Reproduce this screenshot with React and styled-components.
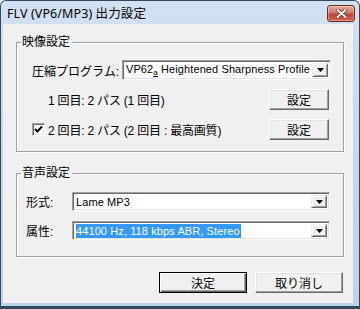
import React from 'react'
import styled, { createGlobalStyle } from 'styled-components'

const GlobalStyle = createGlobalStyle`
    html, body {
        margin: 0;
        padding: 0;
        background: #ffffff;
    }
    body {
        font-family: "Liberation Sans", "Noto Sans CJK JP", sans-serif;
        font-size: 12px;
        color: #000000;
    }
`

const Window = styled.div`
    width: 360px;
    height: 309px;
    box-sizing: border-box;
    display: flex;
    flex-direction: column;
    border: 1px solid #34495e;
    border-bottom-width: 3px;
    border-radius: 6px 6px 0 0;
    padding: 0 6px 3px 2px;
    background: linear-gradient(to bottom, #d2e1f2 0%, #c6d9ee 40%, #bcd3ec 100%);
`

const TitleBar = styled.div`
    height: 23px;
    display: flex;
    align-items: center;
    justify-content: space-between;
    padding-left: 4px;
`

const Title = styled.span`
    font-family: "Noto Sans", "Noto Sans CJK JP", sans-serif;
    font-size: 12.5px;
    color: #000000;
    letter-spacing: 0.1px;
`

const CloseButton = styled.div`
    width: 26px;
    height: 15px;
    margin-top: 2px;
    margin-right: -2px;
    display: flex;
    align-items: center;
    justify-content: center;
    border: 1px solid #6a2a22;
    border-radius: 3px;
    background: linear-gradient(to bottom, #e8a897 0%, #d27a66 45%, #c0452c 55%, #d0654c 100%);
    box-shadow: inset 0 0 0 1px rgba(255, 255, 255, 0.35);
`

const Content = styled.div`
    flex: 1;
    background: #f0f0f0;
    display: flex;
    flex-direction: column;
    padding: 18px 9px 0 13px;
`

const GroupBox = styled.div`
    border: 1px solid #a0a0a0;
    box-shadow: inset 1px 1px 0 #ffffff, 1px 1px 0 #ffffff;
    display: flex;
    flex-direction: column;
    margin-top: ${p => p.$top || 0}px;
`

const Legend = styled.span`
    align-self: flex-start;
    height: 14px;
    line-height: 14px;
    margin: -8px 0 0 4px;
    padding: 0 2px 0 1px;
    background: #f0f0f0;
`

const GroupBody = styled.div`
    display: flex;
    flex-direction: column;
    padding: ${p => p.$pad};
`

const Row = styled.div`
    display: flex;
    align-items: center;
    height: ${p => p.$h || 20}px;
    margin-top: ${p => p.$top || 0}px;
`

const Label = styled.span`
    width: ${p => p.$w}px;
    flex-shrink: 0;
    white-space: nowrap;
`

const PassText = styled.span`
    margin-left: ${p => p.$indent || 0}px;
    white-space: nowrap;
    letter-spacing: -0.2px;
`

const Combo = styled.div`
    box-sizing: border-box;
    width: ${p => p.$w}px;
    height: ${p => p.$h}px;
    display: flex;
    align-items: center;
    background: #ffffff;
    border: 1px solid;
    border-color: #a0a0a0 #ffffff #ffffff #a0a0a0;
    box-shadow: inset 1px 1px 0 #696969, inset -1px -1px 0 #e3e3e3;
    padding: 2px 2px 2px 3px;
`

const ComboText = styled.span`
    flex: 1;
    white-space: nowrap;
    overflow: hidden;
    line-height: 14px;
    font-size: 11px;
    letter-spacing: 0.1px;
`

const Selected = styled.span`
    background: #3399ff;
    color: #ffffff;
    padding: 1px 1px;
    margin-left: -1px;
`

const Sub = styled.span`
    font-size: 8px;
    position: relative;
    top: 2px;
    text-decoration: underline;
`

const ArrowButton = styled.div`
    box-sizing: border-box;
    width: 16px;
    height: 100%;
    flex-shrink: 0;
    display: flex;
    align-items: center;
    justify-content: center;
    background: #f0f0f0;
    border: 1px solid;
    border-color: #f0f0f0 #696969 #696969 #f0f0f0;
    box-shadow: inset 1px 1px 0 #ffffff, inset -1px -1px 0 #a0a0a0;
`

const Button = styled.div`
    box-sizing: border-box;
    width: ${p => p.$w}px;
    height: 21px;
    margin-left: ${p => (p.$push ? 'auto' : '0')};
    margin-right: ${p => p.$mr || 0}px;
    display: flex;
    align-items: center;
    justify-content: center;
    background: #f0f0f0;
    border: 1px solid;
    border-color: ${p => (p.$default ? '#000000' : '#ffffff #696969 #696969 #ffffff')};
    box-shadow: ${p => (p.$default
        ? 'inset 1px 1px 0 #ffffff, inset -1px -1px 0 #696969, inset -2px -2px 0 #a0a0a0'
        : 'inset -1px -1px 0 #a0a0a0, inset 1px 1px 0 #e3e3e3')};
`

const CheckBox = styled.div`
    box-sizing: border-box;
    width: 13px;
    height: 13px;
    flex-shrink: 0;
    background: #ffffff;
    border: 1px solid;
    border-color: #a0a0a0 #ffffff #ffffff #a0a0a0;
    box-shadow: inset 1px 1px 0 #696969, inset -1px -1px 0 #e3e3e3;
    display: flex;
    align-items: center;
    justify-content: center;
`

const ButtonBar = styled.div`
    display: flex;
    justify-content: flex-end;
    gap: 8px;
    margin-top: 15px;
    padding-right: 1px;
`

const DownArrow = () => (
    <svg width="7" height="4" viewBox="0 0 7 4">
        <path d="M0 0 H7 L3.5 4 Z" fill="#000" />
    </svg>
)

const Check = () => (
    <svg width="9" height="9" viewBox="0 0 9 9">
        <path d="M1 4 L3.3 6.5 L8 1.5" stroke="#000" strokeWidth="2" fill="none" />
    </svg>
)

const CloseX = () => (
    <svg width="11" height="9" viewBox="0 0 11 9">
        <path d="M1.5 1 L9.5 8 M9.5 1 L1.5 8" stroke="#5a2a20" strokeWidth="3.4" strokeLinecap="round" />
        <path d="M1.5 1 L9.5 8 M9.5 1 L1.5 8" stroke="#ffffff" strokeWidth="2" strokeLinecap="round" />
    </svg>
)

const ComboBox = ({ w, h, children }) => (
    <Combo $w={w} $h={h}>
        <ComboText>{children}</ComboText>
        <ArrowButton><DownArrow /></ArrowButton>
    </Combo>
)

const App = () => {
    return (
        <>
            <GlobalStyle />
            <Window>
                <TitleBar>
                    <Title>FLV (VP6/MP3) 出力設定</Title>
                    <CloseButton><CloseX /></CloseButton>
                </TitleBar>
                <Content>
                    <GroupBox>
                        <Legend>映像設定</Legend>
                        <GroupBody $pad="11px 12px 11px 15px">
                            <Row $h={20}>
                                <Label $w={90}>圧縮プログラム:</Label>
                                <ComboBox w={209} h={20}>
                                    VP62<Sub>a</Sub> Heightened Sharpness Profile
                                </ComboBox>
                            </Row>
                            <Row $h={21} $top={9}>
                                <PassText $indent={16}>1 回目: 2 パス (1 回目)</PassText>
                                <Button $w={60} $push $mr={2}>設定</Button>
                            </Row>
                            <Row $h={21} $top={9}>
                                <CheckBox><Check /></CheckBox>
                                <PassText $indent={3}>2 回目: 2 パス (2 回目 : 最高画質)</PassText>
                                <Button $w={60} $push $mr={2}>設定</Button>
                            </Row>
                        </GroupBody>
                    </GroupBox>
                    <GroupBox $top={21}>
                        <Legend>音声設定</Legend>
                        <GroupBody $pad="12px 13px 16px 9px">
                            <Row $h={19}>
                                <Label $w={46}>形式:</Label>
                                <ComboBox w={258} h={19}>Lame MP3</ComboBox>
                            </Row>
                            <Row $h={19} $top={10}>
                                <Label $w={46}>属性:</Label>
                                <ComboBox w={258} h={19}>
                                    <Selected>44100 Hz, 118 kbps ABR, Stereo</Selected>
                                </ComboBox>
                            </Row>
                        </GroupBody>
                    </GroupBox>
                    <ButtonBar>
                        <Button $w={88} $default>決定</Button>
                        <Button $w={88}>取り消し</Button>
                    </ButtonBar>
                </Content>
            </Window>
        </>
    )
}

export default App
